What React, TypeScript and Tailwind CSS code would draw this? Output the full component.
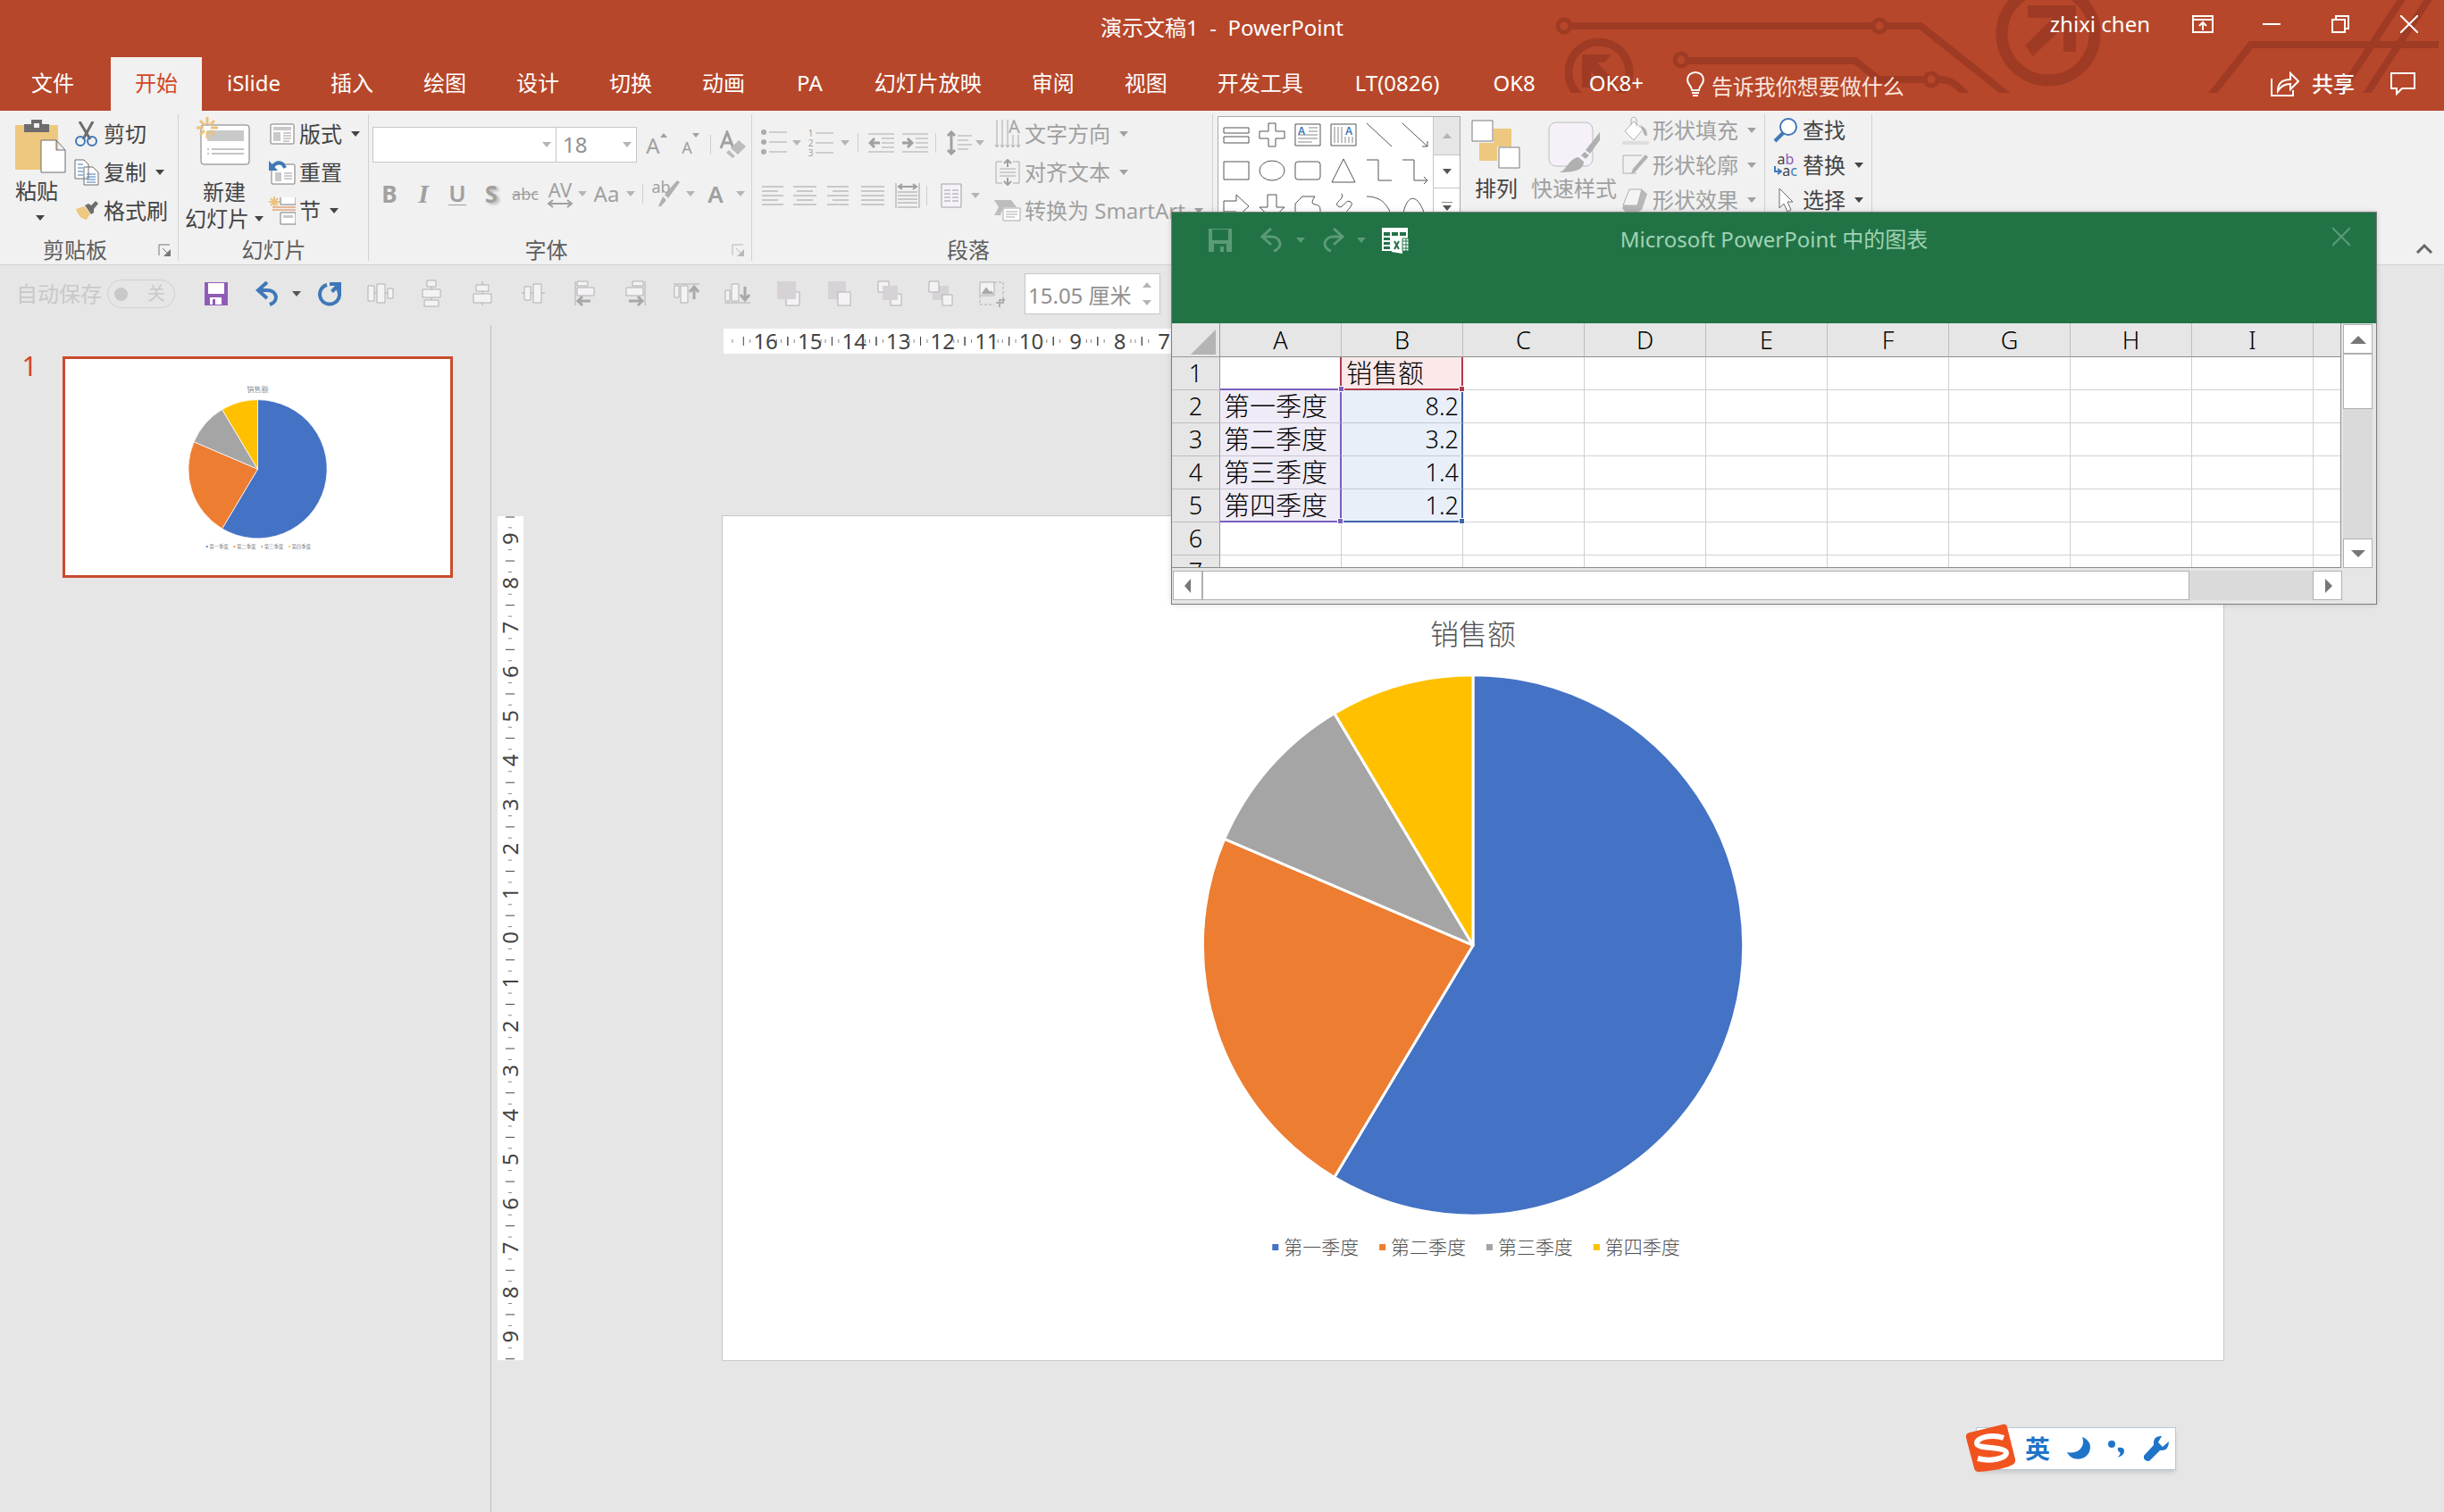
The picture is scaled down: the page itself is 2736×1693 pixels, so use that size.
import type { ReactNode } from "react";

const SALES = [
    { label: "第一季度", value: 8.2, color: "#4472c4" },
    { label: "第二季度", value: 3.2, color: "#ed7d31" },
    { label: "第三季度", value: 1.4, color: "#a5a5a5" },
    { label: "第四季度", value: 1.2, color: "#ffc000" },
];

function Svg({
    w,
    h,
    children,
    className = "",
}: {
    w: number;
    h: number;
    children: ReactNode;
    className?: string;
}) {
    return (
        <svg
            width={w}
            height={h}
            viewBox={`0 0 ${w} ${h}`}
            fill="none"
            className={`shrink-0 ${className}`}
            aria-hidden="true"
        >
            {children}
        </svg>
    );
}

function Caret({ className = "" }: { className?: string }) {
    return (
        <Svg w={10} h={6} className={className}>
            <path d="M0 0h10L5 6z" fill="currentColor" />
        </Svg>
    );
}

/* ---------- title bar and tabs ---------- */

function Circuit() {
    return (
        <svg
            className="pointer-events-none absolute top-0 right-0"
            width="1000"
            height="104"
            viewBox="1736 0 1000 104"
            fill="none"
            stroke="#9f3b24"
            aria-hidden="true"
        >
            <g strokeWidth="8">
                <path d="M1760 29H2096M2112 29h38L2252 110" />
                <path d="M1890 68H2077L2103 89h50M2170 89c16 0 22 8 32 18" />
                <path d="M2474 108L2520 50H2730" />
                <path d="M2692 -6L2616 110M2722 -6L2646 110" />
            </g>
            <g strokeWidth="5">
                <circle cx="1751" cy="29" r="7" />
                <circle cx="2104" cy="29" r="7" />
                <circle cx="1882" cy="67" r="7" />
                <circle cx="2162" cy="89" r="7" />
            </g>
            <circle cx="1790" cy="81" r="34" strokeWidth="9" />
            <circle cx="2293" cy="38" r="52" strokeWidth="13" />
            <path
                d="M1771 61h33l-8 9h-8l22 24-8 8-21-22v18h-10z"
                fill="#9f3b24"
                stroke="none"
            />
            <path
                d="M2270 6h54v52h-14V30l-34 33-9-12 31-31h-28z"
                fill="#9f3b24"
                stroke="none"
            />
        </svg>
    );
}

const TABS_AFTER_HOME = [
    "iSlide",
    "插入",
    "绘图",
    "设计",
    "切换",
    "动画",
    "PA",
    "幻灯片放映",
    "审阅",
    "视图",
    "开发工具",
    "LT(0826)",
    "OK8",
    "OK8+",
];

const ADDIN_TABS = ["PA", "LT(0826)", "OK8", "OK8+"];

function TitleBar() {
    return (
        <header className="relative bg-[#b7472a] text-white">
            <Circuit />
            <div className="relative grid h-16 grid-cols-[1fr_auto_1fr] items-center">
                <span />
                <h1 className="pb-[2px] text-[24px] leading-[30px] whitespace-pre">
                    演示文稿1&nbsp; -&nbsp; PowerPoint
                </h1>
                <div className="flex items-center justify-end pr-[29px] pb-[10px]">
                    <span className="mr-[47px] text-[24px] leading-[30px]">
                        zhixi chen
                    </span>
                    <button
                        type="button"
                        aria-label="功能区显示选项"
                        className="mr-[55px]"
                    >
                        <Svg w={24} h={20}>
                            <path
                                d="M1 1h22v18H1zM1 5h22M12 17V8M8 12l4-4 4 4"
                                stroke="#fff"
                                strokeWidth="2"
                            />
                        </Svg>
                    </button>
                    <button
                        type="button"
                        aria-label="最小化"
                        className="mr-[57px]"
                    >
                        <Svg w={20} h={20}>
                            <path d="M0 10h20" stroke="#fff" strokeWidth="2" />
                        </Svg>
                    </button>
                    <button
                        type="button"
                        aria-label="还原"
                        className="mr-[57px]"
                    >
                        <Svg w={20} h={20}>
                            <path
                                d="M1 5h14v14H1zM5 5V1h14v14h-4"
                                stroke="#fff"
                                strokeWidth="2"
                            />
                        </Svg>
                    </button>
                    <button type="button" aria-label="关闭">
                        <Svg w={20} h={20}>
                            <path
                                d="M0 0l20 20M20 0L0 20"
                                stroke="#fff"
                                strokeWidth="2"
                            />
                        </Svg>
                    </button>
                </div>
            </div>
            <nav className="relative flex h-[60px] items-stretch pb-[2px] pl-[7px] text-[24px] leading-[24px]">
                <button type="button" className="mr-[13px] px-[28px]">
                    文件
                </button>
                <button
                    type="button"
                    className="-mb-[2px] w-[102px] bg-[#f1f1f1] pb-[2px] text-center text-[#d24726]"
                >
                    开始
                </button>
                {TABS_AFTER_HOME.map((tab) => (
                    <button
                        key={tab}
                        type="button"
                        className={
                            ADDIN_TABS.includes(tab) ? "px-[30px]" : "px-[28px]"
                        }
                    >
                        {tab}
                    </button>
                ))}
                <label className="ml-[18px] flex items-center gap-[8px] pt-[6px]">
                    <Svg w={20} h={28} className="mb-[4px]">
                        <path
                            d="M6 21c0-5-5-6-5-12a9 8 0 0118 0c0 6-5 7-5 12zM6 24h8M7 27h6"
                            stroke="#fff"
                            strokeWidth="2"
                        />
                    </Svg>
                    <input
                        type="text"
                        aria-label="告诉我你想要做什么"
                        placeholder="告诉我你想要做什么"
                        className="w-[240px] bg-transparent outline-none placeholder:text-[#fbe4dd] placeholder:opacity-100"
                    />
                </label>
                <div className="ml-auto flex items-center gap-[40px] pt-[2px] pr-[32px]">
                    <button
                        type="button"
                        className="flex items-center gap-[14px] font-medium"
                    >
                        <Svg w={32} h={28}>
                            <path
                                d="M1 8v19h24v-6M8 22c0-9 5-13 14-13V2l9 9-9 9v-6c-7 0-11 3-14 8z"
                                stroke="#fff"
                                strokeWidth="2"
                            />
                        </Svg>
                        共享
                    </button>
                    <button type="button" aria-label="批注">
                        <Svg w={28} h={26}>
                            <path
                                d="M1 1h26v17H13l-6 6v-6H1z"
                                stroke="#fff"
                                strokeWidth="2"
                            />
                        </Svg>
                    </button>
                </div>
            </nav>
        </header>
    );
}

/* ---------- ribbon ---------- */

function Group({
    title,
    launcher,
    faded,
    className = "",
    children,
}: {
    title: string;
    launcher?: boolean;
    faded?: boolean;
    className?: string;
    children: ReactNode;
}) {
    return (
        <section className="flex shrink-0 flex-col">
            <div className="relative flex flex-1 flex-col">
                <span className="absolute top-[4px] right-0 bottom-[4px] w-px bg-[#d2d2d2]" />
                <div className={`flex h-[140px] ${className}`}>{children}</div>
                <div className="flex h-[32px] items-center text-[#5e5e5e]">
                    <h2 className="flex-1 text-center text-[24px] leading-[24px]">
                        {title}
                    </h2>
                    {launcher && (
                        <button
                            type="button"
                            aria-label={`${title}选项`}
                            className="w-[32px] pl-[9px]"
                        >
                            <Svg w={14} h={14}>
                                <path
                                    d="M1 13V1h12M5 5l7 7"
                                    stroke={faded ? "#b9b9b9" : "#777"}
                                />
                                <path
                                    d="M14 6v8H6z"
                                    fill={faded ? "#b9b9b9" : "#777"}
                                />
                            </Svg>
                        </button>
                    )}
                </div>
            </div>
        </section>
    );
}

function SmallButton({
    icon,
    label,
    caret,
    faded,
    className = "h-[43px]",
}: {
    icon: ReactNode;
    label: string;
    caret?: boolean;
    faded?: boolean;
    className?: string;
}) {
    return (
        <button
            type="button"
            className={`flex items-center gap-[4px] whitespace-nowrap ${
                faded ? "text-[#a0a0a0]" : "text-[#444]"
            } ${className}`}
        >
            <span className="flex w-[30px] justify-center">{icon}</span>
            {label}
            {caret && <Caret className="ml-[6px]" />}
        </button>
    );
}

function Burst() {
    return (
        <path
            d="M12 0v8M12 16v8M0 12h8M16 12h8M4 4l5 5M15 15l5 5M20 4l-5 5M9 15l-5 5"
            stroke="#edc27c"
            strokeWidth="3"
        />
    );
}

function ClipboardGroup() {
    return (
        <Group title="剪贴板" launcher className="w-[200px] pl-[17px]">
            <button
                type="button"
                className="flex w-[65px] flex-col items-start pt-[10px] text-[#444]"
            >
                <Svg w={57} h={60}>
                    <path d="M0 6h48v50H0z" fill="#edc87e" />
                    <path d="M10 5h8V0h12v5h8v9H10z" fill="#6d6d6d" />
                    <path d="M21 4h6v5h-6z" fill="#f1f1f1" />
                    <path
                        d="M29 23h17l10 11v25H29zM46 23v11h10"
                        fill="#fff"
                        stroke="#6d6d6d"
                    />
                </Svg>
                <span className="mt-[8px]">粘贴</span>
                <Caret className="mt-[15px] ml-[23px]" />
            </button>
            <div className="flex flex-col pt-[4px]">
                <SmallButton
                    label="剪切"
                    icon={
                        <Svg w={26} h={28}>
                            <path
                                d="M5 0l12 20M20 0L9 20"
                                stroke="#6d6d6d"
                                strokeWidth="3"
                            />
                            <circle cx="6" cy="22" r="5" stroke="#3f78b8" strokeWidth="2" />
                            <circle cx="19" cy="22" r="5" stroke="#3f78b8" strokeWidth="2" />
                        </Svg>
                    }
                />
                <SmallButton
                    label="复制"
                    caret
                    icon={
                        <Svg w={28} h={30}>
                            <path
                                d="M1 1h10l5 5v16H1zM11 9h10l6 6v14H11z"
                                fill="#fff"
                                stroke="#6d6d6d"
                            />
                            <path
                                d="M4 6h6M4 10h6M4 14h6M4 18h6M14 17h10M14 20h10M14 23h10M14 26h10"
                                stroke="#3f78b8"
                            />
                        </Svg>
                    }
                />
                <SmallButton
                    label="格式刷"
                    icon={
                        <Svg w={26} h={22}>
                            <path d="M1 9l9-3 7 8-4 7c-5 0-10-5-12-12z" fill="#edc87e" />
                            <path d="M11 5l4-2 3 2 5-5 3 3-5 6v4l-3 2z" fill="#6d6d6d" />
                        </Svg>
                    }
                />
            </div>
        </Group>
    );
}

function SlidesGroup() {
    return (
        <Group title="幻灯片" className="w-[213px] pl-[7px]">
            <button
                type="button"
                className="flex w-[94px] flex-col items-start pt-[7px] leading-[30px] text-[#444]"
            >
                <Svg w={66} h={56} className="ml-[13px]">
                    <rect x="5" y="9" width="54" height="44" rx="3" fill="#fff" stroke="#7a7a7a" />
                    <path d="M12 15h41v12H12z" fill="#c9c9c9" />
                    <path d="M12 36h2M17 36h36M12 41h2M17 41h36" stroke="#8a8a8a" />
                    <Burst />
                </Svg>
                <span className="mt-[13px] ml-[20px]">新建</span>
                <span className="flex items-center gap-[6px] whitespace-nowrap">
                    幻灯片
                    <Caret />
                </span>
            </button>
            <div className="flex flex-col pt-[4px]">
                <SmallButton
                    label="版式"
                    caret
                    icon={
                        <Svg w={28} h={24}>
                            <rect x="1" y="1" width="26" height="22" rx="1" fill="#fff" stroke="#7a7a7a" />
                            <path d="M4 4h20v4H4zM4 10h8v10H4z" fill="#c9c9c9" />
                            <path d="M15 11h9M15 14h9M15 17h9M15 20h7" stroke="#9a9a9a" />
                        </Svg>
                    }
                />
                <SmallButton
                    label="重置"
                    icon={
                        <Svg w={30} h={28}>
                            <rect x="3" y="5" width="26" height="22" rx="1" fill="#fff" stroke="#7a7a7a" />
                            <path d="M7 14h7v10H7z" fill="#c9c9c9" />
                            <path d="M17 15h9M17 18h9M17 21h9" stroke="#9a9a9a" />
                            <path d="M4 8C8 2 15 1 18 9" stroke="#3f78b8" strokeWidth="4" />
                            <path d="M0 1v11h10z" fill="#3f78b8" />
                        </Svg>
                    }
                />
                <SmallButton
                    label="节"
                    caret
                    icon={
                        <Svg w={30} h={32}>
                            <path d="M13 1v8h17V1" fill="#fff" stroke="#7a7a7a" />
                            <path d="M4 12h26M4 15h26" stroke="#d8803f" />
                            <path d="M13 18h17v13H13z" fill="#fff" stroke="#7a7a7a" />
                            <path d="M16 21h11v3H16z" fill="#c9c9c9" />
                            <path
                                d="M6 0v12M0 6h12M2 2l8 8M10 2l-8 8"
                                stroke="#edc27c"
                                strokeWidth="2"
                            />
                        </Svg>
                    }
                />
            </div>
        </Group>
    );
}

function Combo({
    label,
    value,
    className,
}: {
    label: string;
    value: string;
    className: string;
}) {
    return (
        <div
            className={`grid h-[40px] items-center border border-[#c6c6c6] bg-white *:[grid-area:1/1] ${className}`}
        >
            <select
                aria-label={label}
                defaultValue={value}
                className="h-full w-full appearance-none pl-[7px] text-[#909090]"
            >
                <option value={value}>{value}</option>
            </select>
            <Caret className="pointer-events-none mr-[5px] justify-self-end text-[#b5b5b5]" />
        </div>
    );
}

function Tool({
    label,
    className,
    children,
}: {
    label: string;
    className: string;
    children: ReactNode;
}) {
    return (
        <button
            type="button"
            aria-label={label}
            className={`flex h-[40px] shrink-0 items-center justify-center ${className}`}
        >
            {children}
        </button>
    );
}

function Divider({ className = "" }: { className?: string }) {
    return <span className={`h-[22px] w-px shrink-0 bg-[#cfcfcf] ${className}`} />;
}

function FontGroup() {
    return (
        <Group
            title="字体"
            launcher
            faded
            className="w-[429px] flex-col pt-[18px] pl-[4px] text-[#a0a0a0]"
        >
            <div className="flex items-center">
                <Combo label="字体" value="" className="w-[206px]" />
                <Combo label="字号" value="18" className="-ml-px w-[91px]" />
                <Tool label="增大字号" className="ml-[8px] w-[28px]">
                    <span className="pt-[2px]">A</span>
                    <Svg w={8} h={5} className="mb-[22px]">
                        <path d="M0 5h8L4 0z" fill="currentColor" />
                    </Svg>
                </Tool>
                <Tool label="减小字号" className="ml-[12px] w-[24px]">
                    <span className="pt-[5px] text-[18px]">A</span>
                    <Svg w={8} h={5} className="mb-[22px]">
                        <path d="M0 0h8L4 5z" fill="currentColor" />
                    </Svg>
                </Tool>
                <Divider className="ml-[10px]" />
                <Tool label="清除格式" className="ml-[8px] w-[36px]">
                    <Svg w={34} h={32}>
                        <path
                            d="M2 20L9 2l7 18M5 14h9"
                            stroke="#a0a0a0"
                            strokeWidth="3"
                        />
                        <path d="M22 11l8 7-9 9-8-7zM11 22l7 7-3 2-7-6z" fill="#bcbcbc" />
                    </Svg>
                </Tool>
            </div>
            <div className="mt-[15px] flex items-center">
                <Tool label="加粗" className="w-[38px] text-[26px] font-bold">
                    B
                </Tool>
                <Tool
                    label="倾斜"
                    className="w-[38px] font-['Liberation_Serif',serif] text-[30px] font-bold italic"
                >
                    I
                </Tool>
                <Tool label="下划线" className="w-[38px]">
                    <span className="border-b border-[#a0a0a0] text-[26px] leading-[25px] font-semibold">
                        U
                    </span>
                </Tool>
                <Tool
                    label="文字阴影"
                    className="w-[38px] text-[26px] font-bold [text-shadow:3px_2px_3px_#bbb]"
                >
                    S
                </Tool>
                <Tool label="删除线" className="w-[38px] text-[18px] line-through">
                    abc
                </Tool>
                <Tool label="字符间距" className="w-[40px] flex-col">
                    <span className="text-[22px] leading-[22px]">AV</span>
                    <Svg w={30} h={10}>
                        <path
                            d="M2 5h26M7 1L2 5l5 4M23 1l5 4-5 4"
                            stroke="currentColor"
                            strokeWidth="2"
                        />
                    </Svg>
                </Tool>
                <Caret className="text-[#b5b5b5]" />
                <Tool label="更改大小写" className="w-[44px]">
                    Aa
                </Tool>
                <Caret className="text-[#b5b5b5]" />
                <Divider className="ml-[8px]" />
                <Tool label="文本突出显示颜色" className="ml-[6px] w-[38px]">
                    <span className="-mr-[14px] pb-[16px] text-[18px]">ab</span>
                    <Svg w={24} h={30}>
                        <path d="M24 2l-3-2L7 16l4 4zM5 18l4 4-6 7-3 0z" fill="#b0b0b0" />
                    </Svg>
                </Tool>
                <Caret className="ml-[4px] text-[#b5b5b5]" />
                <Tool label="字体颜色" className="ml-[4px] w-[38px] text-[26px] font-semibold">
                    A
                </Tool>
                <Caret className="ml-[4px] text-[#b5b5b5]" />
            </div>
        </Group>
    );
}

function Lines({ kind }: { kind: "left" | "center" | "right" | "full" }) {
    const paths = {
        left: "M0 1h24M0 6h18M0 11h24M0 16h18M0 21h24",
        center: "M0 1h26M4 6h18M0 11h26M4 16h18M0 21h26",
        right: "M0 1h24M6 6h18M0 11h24M6 16h18M0 21h24",
        full: "M0 1h26M0 6h26M0 11h26M0 16h26M0 21h26",
    };
    return (
        <Svg w={26} h={22}>
            <path d={paths[kind]} stroke="#a0a0a0" />
        </Svg>
    );
}

function ParagraphGroup() {
    return (
        <Group
            title="段落"
            launcher
            faded
            className="w-[516px] pl-[9px] text-[#a0a0a0]"
        >
            <div className="flex w-[262px] flex-col pt-[16px]">
                <div className="flex items-center">
                    <Tool label="项目符号" className="w-[30px]">
                        <Svg w={29} h={30}>
                            <circle cx="3" cy="3" r="3" fill="#ababab" />
                            <circle cx="3" cy="14" r="3" fill="#ababab" />
                            <circle cx="3" cy="25" r="3" fill="#ababab" />
                            <path d="M9 3h20M9 14h20M9 25h20" stroke="#ababab" />
                        </Svg>
                    </Tool>
                    <Caret className="ml-[6px] text-[#b5b5b5]" />
                    <Tool label="编号" className="ml-[6px] w-[32px] gap-[3px]">
                        <span className="flex flex-col text-[10px] leading-[11px]">
                            <span>1</span>
                            <span>2</span>
                            <span>3</span>
                        </span>
                        <Svg w={20} h={30}>
                            <path d="M0 4h20M0 15h20M0 26h20" stroke="#ababab" />
                        </Svg>
                    </Tool>
                    <Caret className="ml-[6px] text-[#b5b5b5]" />
                    <Divider className="ml-[9px]" />
                    <Tool label="减少缩进" className="ml-[9px] w-[32px]">
                        <Svg w={29} h={22}>
                            <path d="M0 1h29M15 6h14M15 11h14M15 16h14M0 21h29" stroke="#ababab" />
                            <path d="M13 11H2M7 6l-5 5 5 5" stroke="#a0a0a0" strokeWidth="3" />
                        </Svg>
                    </Tool>
                    <Tool label="增加缩进" className="ml-[6px] w-[32px]">
                        <Svg w={29} h={22}>
                            <path d="M0 1h29M15 6h14M15 11h14M15 16h14M0 21h29" stroke="#ababab" />
                            <path d="M0 11h11M6 6l5 5-5 5" stroke="#a0a0a0" strokeWidth="3" />
                        </Svg>
                    </Tool>
                    <Divider className="ml-[7px]" />
                    <Tool label="行距" className="ml-[9px] w-[32px]">
                        <Svg w={29} h={28}>
                            <path d="M13 6h16M13 11h12M13 16h16M13 21h12" stroke="#ababab" />
                            <path d="M6 2v24M2 6l4-4 4 4M2 22l4 4 4-4" stroke="#a0a0a0" strokeWidth="3" />
                        </Svg>
                    </Tool>
                    <Caret className="ml-[3px] text-[#b5b5b5]" />
                </div>
                <div className="mt-[19px] flex items-center gap-[2px]">
                    <Tool label="左对齐" className="w-[30px]">
                        <Lines kind="left" />
                    </Tool>
                    <Tool label="居中" className="w-[36px]">
                        <Lines kind="center" />
                    </Tool>
                    <Tool label="右对齐" className="w-[36px]">
                        <Lines kind="right" />
                    </Tool>
                    <Tool label="两端对齐" className="w-[36px]">
                        <Lines kind="full" />
                    </Tool>
                    <Tool label="分散对齐" className="w-[38px]">
                        <Svg w={28} h={28}>
                            <path
                                d="M1 0v28M27 0v28M3 10h22M3 14h22M3 18h22M3 22h22M3 27h22"
                                stroke="#a0a0a0"
                            />
                            <path d="M4 4h20M8 1L4 4l4 3M20 1l4 3-4 3" stroke="#a0a0a0" strokeWidth="2" />
                        </Svg>
                    </Tool>
                    <Divider />
                    <Tool label="分栏" className="ml-[11px] w-[28px]">
                        <Svg w={24} h={28}>
                            <path d="M1 1h22v26H1z" fill="#f7f2f9" stroke="#a0a0a0" />
                            <path
                                d="M4 8h7M4 12h7M4 16h7M4 20h7M13 8h7M13 12h7M13 16h7M13 20h7"
                                stroke="#a0a0a0"
                            />
                        </Svg>
                    </Tool>
                    <Caret className="ml-[6px] text-[#b5b5b5]" />
                </div>
            </div>
            <div className="flex flex-col pt-[4px]">
                <SmallButton
                    label="文字方向"
                    caret
                    faded
                    icon={
                        <Svg w={30} h={32}>
                            <path
                                d="M3 0v31M9 0v31M15 0v31M21 17v14M27 17v14M1 28l2 3 2-3M7 28l2 3 2-3M13 28l2 3 2-3M19 28l2 3 2-3M25 28l2 3 2-3"
                                stroke="#ababab"
                            />
                            <path d="M17 15l5-14 6 14M19 10h7" stroke="#ababab" strokeWidth="2" />
                        </Svg>
                    }
                />
                <SmallButton
                    label="对齐文本"
                    caret
                    faded
                    icon={
                        <Svg w={28} h={30}>
                            <path d="M8 3H1v24h7M20 3h7v24h-7M5 11h18M5 15h18M5 19h18" stroke="#ababab" />
                            <path
                                d="M14 9V1M10 5l4-4 4 4M14 21v8M10 25l4 4 4-4"
                                stroke="#a0a0a0"
                                strokeWidth="2"
                            />
                        </Svg>
                    }
                />
                <SmallButton
                    label="转换为 SmartArt"
                    caret
                    faded
                    icon={
                        <Svg w={30} h={24}>
                            <path d="M0 0h19l6 8H10l-3 9H0l5-9z" fill="#bdbdbd" />
                            <path d="M10 9h19v14H10z" fill="#fff" stroke="#ababab" />
                            <path d="M13 13h13M13 16h13M13 19h10" stroke="#ababab" />
                        </Svg>
                    }
                />
            </div>
        </Group>
    );
}

const SHAPES = [
    "M6 12h28v6H6zM6 22h28v7H6z",
    "M16 7h8v9h10v8H24v9h-8v-9H6v-8h10z",
    "TEXT",
    "VTEXT",
    "M6 7l28 26",
    "M6 7l28 26M34 27v6h-6",
    "M6 10h28v20H6z",
    "M34 20a14 11 0 11-28 0 14 11 0 1128 0z",
    "M9 10h22q3 0 3 3v14q0 3-3 3H9q-3 0-3-3V13q0-3 3-3z",
    "M20 7l13 26H7z",
    "M6 8h13v23h15",
    "M6 8h13v23h15M30 27l4 4-4 4",
    "M6 14h14V7l14 13-14 13v-7H6z",
    "M15 7h10v14h9L20 34 6 21h9z",
    "M6 33V17l8-8h14q-6 8 0 9 6 0 6 6v9z",
    "M18 6c4 6-10 10-4 14s8-9 14-5-10 12-6 18",
    "M6 9c16 0 26 10 28 26",
    "M6 33C10 4 24 4 32 33",
];

function Shape({ d }: { d: string }) {
    if (d === "TEXT" || d === "VTEXT") {
        const vertical = d === "VTEXT";
        return (
            <Svg w={40} h={40}>
                <path d="M6 8h28v24H6z" stroke="#555" />
                <path
                    d={
                        vertical
                            ? "M10 11v18M14 11v18M18 11v18M22 22v7M26 22v7M30 22v7"
                            : "M21 12h10M21 16h10M9 20h22M9 24h22M9 28h16"
                    }
                    stroke="#888"
                />
                <text
                    x={vertical ? 22 : 9}
                    y="20"
                    fontSize="12"
                    fontWeight="600"
                    fill="#3f78b8"
                >
                    A
                </text>
            </Svg>
        );
    }
    return (
        <Svg w={40} h={40}>
            <path d={d} stroke="#555" />
        </Svg>
    );
}

function DrawingGroup() {
    return (
        <Group title="绘图" launcher className="w-[618px] pl-[5px]">
            <div className="mt-[6px] flex h-[130px] w-[272px] border border-[#ababab] bg-white">
                <div className="grid grid-cols-[repeat(6,40px)] grid-rows-[repeat(3,40px)]">
                    {SHAPES.map((d) => (
                        <button key={d} type="button" aria-label="形状">
                            <Shape d={d} />
                        </button>
                    ))}
                </div>
                <div className="ml-auto flex w-[30px] flex-col border-l border-[#c6c6c6] *:flex *:items-center *:justify-center">
                    <button
                        type="button"
                        aria-label="上一行"
                        className="h-[42px] bg-[#e6e6e6] text-[#b5b5b5]"
                    >
                        <Caret className="rotate-180" />
                    </button>
                    <button
                        type="button"
                        aria-label="下一行"
                        className="h-[38px] border-y border-[#c6c6c6] text-[#555]"
                    >
                        <Caret />
                    </button>
                    <button
                        type="button"
                        aria-label="其他"
                        className="h-[40px] flex-col gap-[3px] text-[#555]"
                    >
                        <span className="h-px w-[12px] bg-[#888]" />
                        <Caret />
                    </button>
                </div>
            </div>
            <button
                type="button"
                className="ml-[10px] flex w-[60px] flex-col items-center pt-[10px] text-[#444]"
            >
                <Svg w={56} h={56}>
                    <path d="M9 26h20v20H9zM25 10h20v20H25z" fill="#edc87e" />
                    <path d="M1 1h23v23H1zM31 31h23v23H31z" fill="#fff" stroke="#7a7a7a" />
                </Svg>
                <span className="mt-[9px]">排列</span>
            </button>
            <button
                type="button"
                className="ml-[3px] flex w-[108px] flex-col items-center pt-[12px] whitespace-nowrap text-[#a0a0a0]"
            >
                <Svg w={58} h={58}>
                    <rect x="1" y="1" width="49" height="49" rx="8" fill="#f6f1f9" stroke="#bdbdbd" />
                    <path d="M58 12v9L47 36l-5-4zM41 34l5 4-4 4-5-4z" fill="#b0b0b0" />
                    <path d="M34 40l6 5c0 8-7 12-27 12 8-3 11-16 21-17z" fill="#b0b0b0" />
                </Svg>
                <span className="mt-[5px]">快速样式</span>
            </button>
            <div className="flex flex-col pt-[2px]">
                <SmallButton
                    label="形状填充"
                    caret
                    faded
                    className="h-[39px]"
                    icon={
                        <Svg w={30} h={32}>
                            <path d="M3 17L13 6l10 9-10 12z" fill="#fff" stroke="#b0b0b0" />
                            <path d="M10 10V3q3-4 6 0v8" stroke="#b0b0b0" />
                            <path d="M20 10q8 3 8 12-4 1-5-7z" fill="#b0b0b0" />
                            <path d="M0 28h30v4H0z" fill="#dedede" />
                        </Svg>
                    }
                />
                <SmallButton
                    label="形状轮廓"
                    caret
                    faded
                    className="h-[39px]"
                    icon={
                        <Svg w={30} h={24}>
                            <path d="M22 1H1v20h15" stroke="#b0b0b0" />
                            <path d="M26 0l3 3-14 16-5 3 2-6z" fill="#b0b0b0" />
                        </Svg>
                    }
                />
                <SmallButton
                    label="形状效果"
                    caret
                    faded
                    className="h-[39px]"
                    icon={
                        <Svg w={30} h={28}>
                            <path d="M8 2h14l6 5-6 18-6 3H4l-4-5z" fill="#b8b8b8" />
                            <path d="M8 2h14l-5 18H1z" fill="#f4f4f4" stroke="#b0b0b0" />
                        </Svg>
                    }
                />
            </div>
        </Group>
    );
}

function EditingGroup() {
    return (
        <Group title="编辑" className="w-[120px] pl-[8px]">
            <div className="flex flex-col pt-[2px]">
                <SmallButton
                    label="查找"
                    className="h-[39px]"
                    icon={
                        <Svg w={28} h={28}>
                            <circle cx="17" cy="10" r="9" fill="#fff" stroke="#3f78b8" strokeWidth="2" />
                            <path d="M11 17L2 26" stroke="#3f78b8" strokeWidth="4" />
                        </Svg>
                    }
                />
                <SmallButton
                    label="替换"
                    caret
                    className="h-[39px]"
                    icon={
                        <span className="flex flex-col text-[16px] leading-[13px]">
                            <span>
                                a<span className="text-[#8a5bb5]">b</span>
                            </span>
                            <span className="flex items-center">
                                <Svg w={9} h={10}>
                                    <path
                                        d="M1 0v6h6M4 3l4 3-4 3"
                                        stroke="#3f78b8"
                                        strokeWidth="2"
                                    />
                                </Svg>
                                a<span className="text-[#3f78b8]">c</span>
                            </span>
                        </span>
                    }
                />
                <SmallButton
                    label="选择"
                    caret
                    className="h-[39px]"
                    icon={
                        <Svg w={18} h={30}>
                            <path
                                d="M2 2v22l5-5 4 9 4-2-4-9h6z"
                                fill="#fff"
                                stroke="#6d6d6d"
                            />
                        </Svg>
                    }
                />
            </div>
        </Group>
    );
}

function Ribbon() {
    return (
        <div className="flex border-b border-[#d2d2d2] bg-[#f1f1f1] text-[24px] leading-[24px]">
            <ClipboardGroup />
            <SlidesGroup />
            <FontGroup />
            <ParagraphGroup />
            <DrawingGroup />
            <EditingGroup />
            <button
                type="button"
                aria-label="折叠功能区"
                className="mt-auto ml-auto p-[12px]"
            >
                <Svg w={20} h={12}>
                    <path d="M2 11l8-8 8 8" stroke="#666" strokeWidth="3" />
                </Svg>
            </button>
        </div>
    );
}

/* ---------- quick access toolbar ---------- */

const QUICK_ICONS: { label: string; art: ReactNode }[] = [
    {
        label: "横向分布",
        art: <path d="M1 7h7v17H1zM11 5h9v21h-9zM23 10h6v11h-6zM8 15h3M20 15h3" />,
    },
    {
        label: "纵向分布",
        art: <path d="M10 1h10v7H10zM5 11h20v9H5zM7 23h16v7H7zM15 8v3M15 20v3" />,
    },
    {
        label: "水平居中",
        art: <path d="M8 6h14v7H8zM5 16h20v10H5zM15 2v4M15 13v3M15 26v3" />,
    },
    {
        label: "垂直居中",
        art: <path d="M5 8h7v15H5zM15 5h9v21h-9zM2 15h3M12 15h3M24 15h4" />,
    },
    {
        label: "左对齐",
        art: (
            <>
                <path d="M5 2v27M7 2h12v5H7zM7 9h19v9H7z" />
                <path d="M22 24H8M13 19l-5 5 5 5" stroke="#a8a8a8" strokeWidth="3" fill="none" />
            </>
        ),
    },
    {
        label: "右对齐",
        art: (
            <>
                <path d="M26 2v27M12 2h12v5H12zM5 9h19v9H5z" />
                <path d="M8 24h15M18 19l5 5-5 5" stroke="#a8a8a8" strokeWidth="3" fill="none" />
            </>
        ),
    },
    {
        label: "顶端对齐",
        art: (
            <>
                <path d="M1 5h29M2 7h5v13H2zM9 7h8v19H9z" />
                <path d="M24 22V8M19 14l5-6 5 6" stroke="#a8a8a8" strokeWidth="3" fill="none" />
            </>
        ),
    },
    {
        label: "底端对齐",
        art: (
            <>
                <path d="M1 26h29M2 12h5v12H2zM9 5h8v19H9z" />
                <path d="M24 8v14M19 17l5 6 5-6" stroke="#a8a8a8" strokeWidth="3" fill="none" />
            </>
        ),
    },
    {
        label: "置于底层",
        art: (
            <>
                <path d="M13 14h15v15H13z" />
                <path d="M3 2h21v20H3z" fill="#d6d2d6" stroke="none" />
            </>
        ),
    },
    {
        label: "置于顶层",
        art: (
            <>
                <path d="M3 2h20v20H3z" fill="#d6d2d6" stroke="none" />
                <path d="M14 14h14v15H14z" />
            </>
        ),
    },
    {
        label: "下移一层",
        art: (
            <>
                <path d="M2 2h12v12H2zM16 16h12v13H16z" />
                <path d="M7 7h17v16H7z" fill="#d6d2d6" stroke="none" />
            </>
        ),
    },
    {
        label: "上移一层",
        art: (
            <>
                <path d="M6 7h18v16H6z" fill="#d6d2d6" stroke="none" />
                <path d="M2 2h11v12H2zM17 17h11v12H17z" />
            </>
        ),
    },
    {
        label: "裁剪",
        art: (
            <>
                <path d="M2 3h16v15H2z" />
                <path d="M4 16l5-7 4 5 2-1 2 3z" fill="#a8a8a8" />
                <path d="M18 3h10v16M2 18v10h16" strokeDasharray="3 2" fill="none" />
                <path d="M20 26h8v-6M24 31v-8h6" strokeWidth="2" fill="none" />
            </>
        ),
    },
];

function QuickAccess() {
    return (
        <div className="flex h-[67px] shrink-0 items-center pb-[3px] pl-[18px] text-[24px] leading-[24px]">
            <label className="flex items-center gap-[6px] text-[#c9c9c9]">
                自动保存
                <span className="grid items-center *:[grid-area:1/1]">
                    <input
                        type="checkbox"
                        className="h-[32px] w-[76px] appearance-none rounded-full border border-[#d0d0d0]"
                    />
                    <span className="pointer-events-none ml-[8px] size-[15px] rounded-full bg-[#c9c9c9]" />
                    <span className="pointer-events-none mr-[11px] justify-self-end text-[20px]">
                        关
                    </span>
                </span>
            </label>
            <button type="button" aria-label="保存" className="ml-[33px]">
                <Svg w={26} h={26}>
                    <path d="M0 0h26v26H0z" fill="#8f5db7" />
                    <path d="M4 1h18v12H4zM6 17h13v8H6z" fill="#fff" />
                    <path d="M9 19h3v6H9z" fill="#8f5db7" />
                </Svg>
            </button>
            <button type="button" aria-label="撤消" className="ml-[31px]">
                <Svg w={28} h={28}>
                    <path
                        d="M3 10h10c11 0 14 12 3 16M13 1L3 10l10 9"
                        stroke="#3f78b8"
                        strokeWidth="4"
                    />
                </Svg>
            </button>
            <Caret className="ml-[13px] text-[#555]" />
            <button type="button" aria-label="重复" className="ml-[18px]">
                <Svg w={28} h={28}>
                    <path
                        d="M11 4a11 11 0 1011 3"
                        stroke="#3f78b8"
                        strokeWidth="4"
                    />
                    <path d="M14 1h13v13h-4V8l-5 5-3-3 5-5h-6z" fill="#3f78b8" />
                </Svg>
            </button>
            <div className="ml-[28px] flex gap-[25px]">
                {QUICK_ICONS.map(({ label, art }) => (
                    <button key={label} type="button" aria-label={label}>
                        <Svg w={32} h={32}>
                            <g fill="#f4f2f5" stroke="#b0b0b0">
                                {art}
                            </g>
                        </Svg>
                    </button>
                ))}
            </div>
            <div className="ml-[20px] flex h-[46px] w-[152px] items-center justify-between border border-[#c6c6c6] bg-white pr-[9px] pl-[3px]">
                <input
                    type="text"
                    aria-label="形状宽度"
                    defaultValue="15.05 厘米"
                    className="w-[120px] text-[#909090] outline-none"
                />
                <span className="flex flex-col gap-[14px] text-[#b5b5b5]">
                    <button type="button" aria-label="增加">
                        <Caret className="rotate-180" />
                    </button>
                    <button type="button" aria-label="减少">
                        <Caret />
                    </button>
                </span>
            </div>
        </div>
    );
}

/* ---------- slide ---------- */

function wedges(cx: number, cy: number, r: number) {
    const total = SALES.reduce((sum, s) => sum + s.value, 0);
    let angle = 0;
    return SALES.map((s) => {
        const start = angle;
        angle += (s.value / total) * Math.PI * 2;
        const x1 = cx + r * Math.sin(start);
        const y1 = cy - r * Math.cos(start);
        const x2 = cx + r * Math.sin(angle);
        const y2 = cy - r * Math.cos(angle);
        const large = angle - start > Math.PI ? 1 : 0;
        return {
            color: s.color,
            d: `M${cx} ${cy}L${x1} ${y1}A${r} ${r} 0 ${large} 1 ${x2} ${y2}Z`,
        };
    });
}

function Slide({ className }: { className: string }) {
    return (
        <svg viewBox="0 0 1682 946" className={className} role="img" aria-label="销售额">
            <text
                x="841"
                y="144"
                fontSize="32"
                fontWeight="300"
                textAnchor="middle"
                fill="#505050"
            >
                销售额
            </text>
            {wedges(841, 481, 303).map((w) => (
                <path
                    key={w.color}
                    d={w.d}
                    fill={w.color}
                    stroke="#fff"
                    strokeWidth="3"
                    strokeLinejoin="round"
                />
            ))}
            {SALES.map((s, i) => (
                <g key={s.label}>
                    <rect x={616 + i * 120} y="816" width="7" height="7" fill={s.color} />
                    <text
                        x={629 + i * 120}
                        y="827"
                        fontSize="21"
                        fontWeight="300"
                        fill="#505050"
                    >
                        {s.label}
                    </text>
                </g>
            ))}
        </svg>
    );
}

const CM = 49.64;

function HorizontalRuler() {
    // the data window covers everything to the right of -7
    const marks = Array.from({ length: 10 }, (_, i) => i - 16);
    return (
        <svg
            viewBox="0 0 1682 28"
            className="w-full overflow-visible bg-white"
            aria-hidden="true"
        >
            {marks.map((n) => {
                const x = 841 + n * CM;
                return (
                    <g key={n}>
                        <text x={x} y="23" fontSize="24" textAnchor="middle" fill="#444">
                            {Math.abs(n)}
                        </text>
                        <path
                            d={`M${x - CM / 2} 9v10M${x + CM / 2} 9v10`}
                            stroke="#444"
                        />
                        <path
                            d={`M${x - CM * 0.75} 12v4M${x - CM / 4 - 5} 12v4M${x + CM / 4 + 5} 12v4`}
                            stroke="#888"
                        />
                    </g>
                );
            })}
        </svg>
    );
}

function VerticalRuler() {
    const marks = Array.from({ length: 19 }, (_, i) => i - 9);
    return (
        <svg
            viewBox="0 0 29 945"
            className="w-full overflow-visible bg-white"
            aria-hidden="true"
        >
            <path d="M9 1h10" stroke="#444" />
            {marks.map((n) => {
                const y = 472 + n * CM;
                return (
                    <g key={n}>
                        <text
                            transform={`translate(23 ${y}) rotate(-90)`}
                            fontSize="24"
                            textAnchor="middle"
                            fill="#444"
                        >
                            {Math.abs(n)}
                        </text>
                        <path d={`M9 ${y + CM / 2}h10`} stroke="#444" />
                        <path
                            d={`M12 ${y - CM / 4}h4M12 ${y + CM / 4}h4`}
                            stroke="#888"
                        />
                    </g>
                );
            })}
        </svg>
    );
}

function Workspace() {
    return (
        <main className="flex flex-1 items-stretch">
            <aside className="flex w-[550px] shrink-0 items-start border-r border-[#bdbdbd] pt-[35px]">
                <span className="w-[70px] pr-[4px] text-center text-[30px] leading-[22px] text-[#d24726]">
                    1
                </span>
                <button
                    type="button"
                    aria-label="幻灯片 1"
                    className="w-[437px] border-3 border-[#ca4b2c] bg-white"
                >
                    <Slide className="block w-full" />
                </button>
            </aside>
            <div className="ml-[7px] grid flex-1 grid-cols-[29px_minmax(0,1fr)] content-start pt-[4px]">
                <span />
                <div className="pr-[246px] pl-[224px]">
                    <HorizontalRuler />
                </div>
                <div className="pt-[182px]">
                    <VerticalRuler />
                </div>
                <div className="pt-[181px] pr-[246px] pl-[222px]">
                    <Slide className="block w-full border border-[#c8c8c8] bg-white" />
                </div>
            </div>
        </main>
    );
}

/* ---------- chart data window ---------- */

const COLUMNS = ["A", "B", "C", "D", "E", "F", "G", "H", "I", ""];
const ROWS = [1, 2, 3, 4, 5, 6, 7];

function Handle({ className }: { className: string }) {
    return (
        <span
            className={`absolute z-10 size-[7px] border border-white ${className}`}
        />
    );
}

function Cell({ row, col }: { row: number; col: string }) {
    const sale = SALES[row - 2];
    const last = row === 5;

    if (col === "B" && row === 1) {
        return (
            <td className="relative h-[37px] border-r-2 border-b-2 border-[#b03a4a] bg-[#fbe9e9] p-0 pl-[5px]">
                销售额
                <Handle className="-bottom-[4px] -left-[4px] bg-[#7b5ebf]" />
                <Handle className="-right-[4px] -bottom-[4px] bg-[#b03a4a]" />
            </td>
        );
    }
    if (col === "A" && row === 1) {
        return (
            <td className="h-[37px] border-r-2 border-b-2 border-r-[#b03a4a] border-b-[#7b5ebf] p-0" />
        );
    }
    if (col === "A" && sale) {
        return (
            <td
                className={`relative h-[37px] border-r-2 border-r-[#7b5ebf] bg-[#f0ecf7] p-0 pl-[4px] ${
                    last ? "border-b-2 border-b-[#7b5ebf]" : "border-b border-b-[#c9c6d2]"
                }`}
            >
                {sale.label}
                {last && <Handle className="-right-[4px] -bottom-[4px] bg-[#7b5ebf]" />}
            </td>
        );
    }
    if (col === "B" && sale) {
        return (
            <td
                className={`relative h-[37px] border-r-2 border-r-[#3f64a8] bg-[#e8eff9] p-0 pr-[3px] text-right text-[27px] ${
                    last ? "border-b-2 border-b-[#3f64a8]" : "border-b border-b-[#c3c9d2]"
                }`}
            >
                {sale.value}
                {last && <Handle className="-right-[4px] -bottom-[4px] bg-[#3f64a8]" />}
            </td>
        );
    }
    return <td className="h-[37px] border-r border-b border-[#cfd2d0] p-0" />;
}

function Sheet() {
    return (
        <div className="h-[274px] min-w-0 flex-1 overflow-hidden border-r border-b border-[#8c8c8c] bg-white">
            <table className="w-[1414px] table-fixed border-separate border-spacing-0 text-[29px] leading-[34px] font-light text-black">
                <thead>
                    <tr className="bg-[#e6e6e6] text-[27px]">
                        <th className="h-[38px] w-[54px] border-r border-b border-[#9a9a9a] p-0">
                            <Svg w={28} h={28} className="mt-[4px] ml-[21px]">
                                <path d="M28 0v28H0z" fill="#b4b4b4" />
                            </Svg>
                        </th>
                        {COLUMNS.map((col) => (
                            <th
                                key={col}
                                className="h-[38px] w-[136px] border-r border-b border-r-[#bdbdbd] border-b-[#8c8c8c] p-0 font-light"
                            >
                                {col}
                            </th>
                        ))}
                    </tr>
                </thead>
                <tbody>
                    {ROWS.map((row) => (
                        <tr key={row}>
                            <th className="h-[37px] border-r border-b border-r-[#9a9a9a] border-b-[#bdbdbd] bg-[#e6e6e6] p-0 text-[27px] font-light">
                                {row}
                            </th>
                            {COLUMNS.map((col) => (
                                <Cell key={col} row={row} col={col} />
                            ))}
                        </tr>
                    ))}
                </tbody>
            </table>
        </div>
    );
}

function ScrollButton({ label, d }: { label: string; d: string }) {
    return (
        <button
            type="button"
            aria-label={label}
            className="flex size-[33px] shrink-0 items-center justify-center border border-[#b0b0b0] bg-white"
        >
            <Svg w={18} h={18}>
                <path d={d} fill="#777" />
            </Svg>
        </button>
    );
}

function DataWindow() {
    return (
        <div
            role="dialog"
            aria-label="Microsoft PowerPoint 中的图表"
            className="absolute top-[237px] left-[1311px] flex w-[1350px] flex-col border border-[#7d7d7d] bg-[#e6e6e6] shadow-[0_0_6px_rgba(0,0,0,0.15)]"
        >
            <div className="grid h-[124px] grid-cols-[1fr_auto_1fr] items-start bg-[#217346] pt-[16px] text-[#5b9b76]">
                <div className="flex items-center pl-[41px]">
                    <button type="button" aria-label="保存">
                        <Svg w={26} h={26}>
                            <path d="M0 0h26v26H0z" fill="currentColor" />
                            <path
                                d="M4 1h18v12H4zM6 17h14v9h-3v-6h-4v6H6z"
                                fill="#217346"
                            />
                        </Svg>
                    </button>
                    <button type="button" aria-label="撤消" className="ml-[31px]">
                        <Svg w={28} h={28}>
                            <path
                                d="M3 10h10c11 0 14 12 3 16M13 1L3 10l10 9"
                                stroke="currentColor"
                                strokeWidth="3"
                            />
                        </Svg>
                    </button>
                    <Caret className="ml-[13px]" />
                    <button type="button" aria-label="恢复" className="ml-[17px]">
                        <Svg w={28} h={28}>
                            <path
                                d="M25 10H15C4 10 1 22 12 26M15 1l10 9-10 9"
                                stroke="currentColor"
                                strokeWidth="3"
                            />
                        </Svg>
                    </button>
                    <Caret className="ml-[13px]" />
                    <button
                        type="button"
                        aria-label="在 Microsoft Excel 中编辑数据"
                        className="ml-[18px]"
                    >
                        <Svg w={31} h={30}>
                            <path d="M0 1h29v26H0z" fill="#fff" />
                            <path
                                d="M2 6h7v4H2zM11 6h7v4h-7zM20 6h7v4h-7zM2 12h7v3H2zM2 17h7v3H2zM2 22h7v3H2z"
                                fill="#217346"
                            />
                            <path d="M11 12l12-2v20l-12-2z" fill="#fff" />
                            <path d="M23 13h7v14h-7z" fill="#fff" stroke="#217346" />
                            <path d="M23 16h7M23 20h7M23 24h7M27 13v14" stroke="#217346" />
                            <path d="M14 16l5 9M19 16l-5 9" stroke="#217346" strokeWidth="2" />
                        </Svg>
                    </button>
                </div>
                <span className="text-[24px] leading-[28px] text-[#a0d3b4]">
                    Microsoft PowerPoint 中的图表
                </span>
                <button
                    type="button"
                    aria-label="关闭"
                    className="mr-[29px] justify-self-end"
                >
                    <Svg w={20} h={22}>
                        <path d="M0 1l20 20M20 1L0 21" stroke="currentColor" strokeWidth="2" />
                    </Svg>
                </button>
            </div>
            <div className="flex gap-[2px] pr-[4px]">
                <Sheet />
                <div className="mt-[1px] flex flex-col bg-[#dadada]">
                    <ScrollButton label="向上" d="M0 14h18L9 5z" />
                    <span className="h-[62px] border border-[#b0b0b0] bg-white" />
                    <span className="flex-1" />
                    <ScrollButton label="向下" d="M1 5h16l-8 8z" />
                </div>
            </div>
            <div className="mt-[3px] mr-[38px] mb-[4px] ml-[1px] flex bg-[#dadada]">
                <ScrollButton label="向左" d="M12 1v16L5 9z" />
                <span className="h-[33px] w-[1105px] border border-[#b0b0b0] bg-white" />
                <span className="flex-1" />
                <ScrollButton label="向右" d="M6 1v16l8-8z" />
            </div>
        </div>
    );
}

/* ---------- input method bar ---------- */

function InputMethodBar() {
    return (
        <div className="absolute right-[300px] bottom-[43px] flex items-center text-[#1f74c8]">
            <Svg w={58} h={56} className="z-10 -mr-[46px]">
                <path
                    d="M5 10L42 1q4-1 5 3l9 36q1 5-5 7-10 5-36 7-4 0-5-4L1 16q-1-5 4-6z"
                    fill="#f1531f"
                />
                <path
                    d="M43 16c-14-5-30 0-30 6 0 7 33 3 33 11 0 6-18 10-32 6"
                    stroke="#fff"
                    strokeWidth="6"
                />
            </Svg>
            <div className="flex h-[48px] w-[224px] items-center border border-[#b7c9da] bg-white pl-[54px] shadow-md">
                <button type="button" className="text-[28px] leading-[28px] font-bold">
                    英
                </button>
                <button type="button" aria-label="半角" className="ml-[18px]">
                    <Svg w={28} h={28}>
                        <path
                            d="M18 1c4 10-4 20-17 17 5 12 26 10 26-6 0-5-4-9-9-11z"
                            fill="currentColor"
                        />
                    </Svg>
                </button>
                <button type="button" aria-label="标点" className="ml-[18px]">
                    <Svg w={20} h={20}>
                        <circle cx="5" cy="5" r="4" fill="currentColor" />
                        <path d="M12 9q7-1 7 4 0 5-8 7 5-4 3-6-3-1-2-5z" fill="currentColor" />
                    </Svg>
                </button>
                <button type="button" aria-label="设置" className="ml-[20px]">
                    <Svg w={30} h={30}>
                        <path
                            d="M21 1q-10-1-9 10L1 23q-1 6 6 6l12-12q10 1 10-10l-7 6-5-5z"
                            fill="currentColor"
                        />
                    </Svg>
                </button>
            </div>
        </div>
    );
}

export default function App() {
    return (
        <div className="relative flex min-h-screen flex-col overflow-hidden bg-[#e6e6e6] font-['Noto_Sans','Noto_Sans_CJK_SC',sans-serif]">
            <TitleBar />
            <Ribbon />
            <QuickAccess />
            <Workspace />
            <DataWindow />
            <InputMethodBar />
        </div>
    );
}
